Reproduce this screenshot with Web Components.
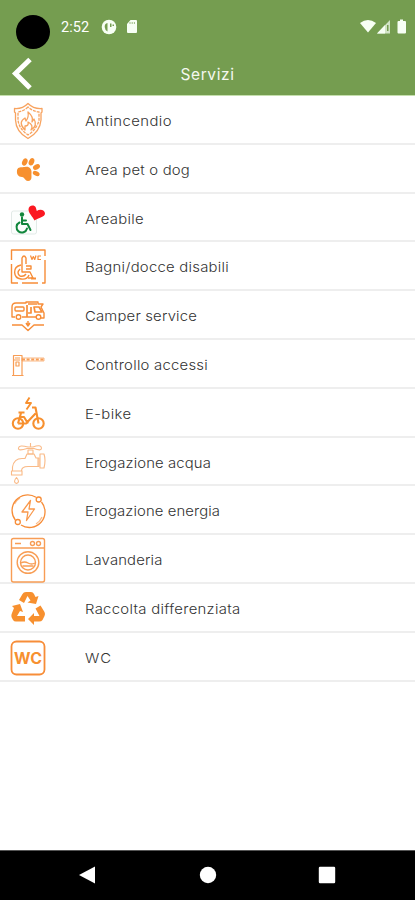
<!DOCTYPE html>
<html lang="it"><head><meta charset="utf-8"><title>Servizi</title>
<style>html,body{margin:0;height:100%;background:#fff;overflow:hidden}</style></head><body>
<service-app></service-app>
<script>
const define=(name,html,init)=>{
  const t=document.createElement('template');t.innerHTML=html;
  customElements.define(name,class extends HTMLElement{
    constructor(){super();this.attachShadow({mode:'open'}).append(t.content.cloneNode(true));}
    connectedCallback(){if(init)init(this,this.shadowRoot);}
  });
};

/* Icons share a 60x48 drawing area, the left part of a row. */
const icons={
shield:`<g stroke-width="1.3" opacity=".8"><path d="M28 7.500C24.500 11 20 13 14.500 12.500V16L15.500 17V24Q16 36 28 42.500Q40 36 41 24V17L42 16V12.500C36 13 31.500 11 28 7.500Z"/><path d="M28 11Q24 15 18 16V24Q19 33 28 39Q37 33 39 24V16Q32 15 28 11Z" stroke-dasharray="3 1"/><path d="M24 33Q18 26 25 22L26 25Q29 21 28 16Q34 21 32 26L34 23Q38 30 31 34Q34 29 28 26Q29 30 25 30L25 34Z"/></g>`,
paw:`<g fill="#f7902f" stroke="none"><path d="M17 25.500C17.500 21 22 22.500 25 22C29 21 32 24 31.500 28C31 31 33 35.500 28 36C25 36 25 32.500 22 32C18 32 16.500 29 17 25.500Z"/><ellipse cx="24.800" cy="17" rx="2.600" ry="3.700" transform="rotate(24 24.800 17)"/><ellipse cx="31.500" cy="16.800" rx="2.600" ry="3.800" transform="rotate(25 31.500 16.800)"/><ellipse cx="36.500" cy="22" rx="2.500" ry="3.700" transform="rotate(62 36.500 22)"/><ellipse cx="36.200" cy="28.500" rx="2.300" ry="3.600" transform="rotate(-65 36.200 28.500)"/></g>`,
areabile:`<rect x="11.500" y="17" width="25" height="23" rx="2" fill="#fcfefd" stroke="#e2eae7"/><g stroke="#11863c" stroke-width="2" stroke-linecap="round"><path d="M22 23.500V30H27.500L30.500 36M22 26.500H26"/><path d="M19.500 28.500A5.300 5.300 0 1 0 27 34.500"/></g><circle cx="22" cy="20.500" r="2.200" fill="#11863c" stroke="none"/><path d="M34.500 26.500C32.500 22.500 28.500 19 28.500 15.500C28.500 11.500 34 10 35.800 13.500L36.800 17C40 14.500 45 16 45 19.500C45 23 38.500 23.500 34.500 26.500Z" fill="#fb1821" stroke="none"/>`,
accessible:`<g stroke-width="1.400"><path d="M11.500 18V8H45V14M11.500 22V41H18M22 41H38M42 41H45V18"/><path d="M22 21V16Q24 12 26 16V22M22 21V30H30L33 36H28M26 24H31V27H26"/><path d="M21 23C12 25 13 36 21 37Q27 38 29 33M20 27Q16 31 20 34Q24 35 26 32"/><path d="M31 36.500H36" stroke-width="2"/><path d="M30.500 13.500L32 17.500L33.300 14.500L34.700 17.500L36 13.500M41 14H38V17.500H41" stroke-width="1.200"/></g>`,
camper:`<g stroke-width="1.400"><path d="M15 26H12V16Q12 12 16 12H26V11H38V13H43L41 16L44 22V27H41M22 26H36"/><rect x="15" y="16" width="9" height="4" rx="1"/><path d="M27 14V26M31 16V22H28M34 16H39L42 21H35ZM28 13H37" stroke-width="1.700"/><circle cx="18.500" cy="26" r="2.300"/><circle cx="38.500" cy="26" r="2.300"/><path d="M12 34H22L28 39.500L34 34H44"/><path d="M28 30V35M26 32L28 35L30 32"/></g>`,
barrier:`<g stroke-width="1.200" opacity=".85"><path d="M13.500 35.500V15.500H22V35.500M12 35.500H23.500M14 20H20M15 18H20"/><path d="M16 22H19V26H16Z"/><path d="M22 18H44V21H22Z" stroke-width=".7"/><path d="M22 19.500H43.500" stroke-width="2.200" stroke-dasharray="3 1.600"/></g>`,
bike:`<g stroke-width="2.100" stroke="#f7902f"><circle cx="18" cy="34.500" r="5.200"/><circle cx="38.500" cy="34.500" r="5.200"/><path d="M18 34.500H26L35.500 24.500M21 24L18 34.500M20 28H24L28 34.500M18.500 23.500H24.500M32 18.500H35.500L38.500 34.500"/><path d="M29.500 8.500L26 14H31L26.500 20.500" stroke-width="1.900"/></g>`,
tap:`<g stroke-width="1.100" opacity=".6"><path d="M12.500 33V29Q14 20.500 22 20.500H25L27 16H34L36 20H39V28.500H28Q21.500 28.500 21.500 33"/><path d="M11.500 33H22V37H11.500ZM40 16H44Q46 22 44 30H40ZM38 20V28"/><path d="M28 12H33V16H28ZM27 10.500Q18 13.500 18.500 10Q19 6.500 28 9H33Q41 6 41.500 10Q41.500 13.500 34 10.500ZM30.500 5V9"/><path d="M16.500 39.500Q12.500 44 16.500 45.500Q20.500 44 16.500 39.500Z"/></g>`,
energy:`<g stroke-width="1.300"><path d="M15.300 34A15.600 15.600 0 0 1 36 11.300M41.500 16A15.600 15.600 0 0 1 21 39"/><path d="M14.500 18A15 15 0 0 1 20 12M42 31A15 15 0 0 1 36 38" opacity=".6"/><circle cx="38.700" cy="13.500" r="2.500"/><circle cx="17.800" cy="36" r="2.500"/><path d="M30.500 14.500L22 26H28L26.500 34.500L34.500 23H29Z" opacity=".9"/></g>`,
washer:`<g stroke-width="1.400" opacity=".85"><rect x="11.500" y="3.500" width="33" height="43.500" rx="2"/><path d="M12 13H44M15 8.500H21"/><circle cx="32.500" cy="8.500" r="2"/><circle cx="38.500" cy="8.500" r="2"/><circle cx="28" cy="27.500" r="10.800"/><circle cx="28" cy="27.500" r="7.500"/><path d="M21 28Q24.500 26 28 28T35 28M22.500 31H33.500"/></g>`,
recycle:`<g fill="#f7902f" stroke="none"><path d="M19 16L22.500 10Q23.500 8 26 8H31Q33 8 34 10L35.500 13L38.500 12L36 20L27.500 18.500L30.500 16.500L27.500 12L24 19Z"/><path d="M12 22L20 20L23 28L20 27L17 32H25V37.500H16Q14 37.500 13 36L11.500 33Q11 31 12 29L14 24Z"/><path d="M35.500 24.500L40.500 21.500L44.500 28Q45.500 30 44.500 32L42.500 36Q41.500 37.500 39 37.500H34V41L28 35L34 29V32H39.500Z"/></g>`,
wc:`<rect x="11.500" y="8.500" width="33" height="33" rx="5" stroke-width="1.800"/><text x="14" y="30.500" textLength="28" lengthAdjust="spacingAndGlyphs" font-family="Inter,sans-serif" font-size="15.500" font-weight="700" fill="#f7902f" stroke="none">WC</text>`
};

define('service-icon',`<style>:host{display:block;width:60px;height:48px;flex:none}svg{display:block;overflow:visible;fill:none;stroke:#f78d38;stroke-linejoin:round}</style><svg width="60" height="48" viewBox="0 0 60 48"></svg>`,
(el,root)=>{root.querySelector('svg').innerHTML=icons[el.getAttribute('name')];});

/* The label's tracking is set so that it fills the width given by "span". */
define('service-row',`<style>
:host{display:flex;box-sizing:border-box;height:48.8px;border-bottom:2px solid #eee;align-items:flex-start}
.label{display:inline-block;margin-left:25px;font:300 13.5px/50px Inter,"Liberation Sans",sans-serif;color:#333;white-space:nowrap;transform-origin:0 50%}
</style><slot name="icon"></slot><span class="label"><slot></slot></span>`,
(el,root)=>{
  const label=root.querySelector('.label');
  const stretch=1.1,target=+el.getAttribute('span')/stretch;
  const gap=(target-label.getBoundingClientRect().width)/el.textContent.length;
  label.style.letterSpacing=gap.toFixed(3)+'px';
  label.style.transform=`scaleX(${stretch})`;
});

define('status-bar',`<style>
:host{display:flex;height:53px;box-sizing:border-box;padding:15px 8px 0 16px;align-items:flex-start;color:#fff}
.camera{width:34px;height:34px;border-radius:50%;background:#000}
time{margin:4px 0 0 11px;width:29px;font:400 14.500px/17px Roboto,sans-serif;letter-spacing:.1px}
svg{display:block;fill:#f7fff4}.left{margin:4px 0 0 11px}.right{margin:4px 0 0 auto}
</style><span class="camera"></span><time>2:52</time>
<svg class="left" width="38" height="16" viewBox="0 0 38 16"><circle cx="8" cy="8" r="7.300"/><path d="M6.500 4Q3.500 4.500 3.700 8Q4 11.500 6.500 12.500V4ZM9 4.500H10.500V8H9ZM11.500 5.500H13V7H11.500Z" fill="#759d50"/><path d="M29.500 1H35Q36 1 36 2V13Q36 14 35 14H27Q26 14 26 13V5Z"/><path d="M29 3V5M31.200 3V5M33.400 3V5" stroke="#759d50" stroke-width=".7"/></svg>
<svg class="right" width="48" height="16" viewBox="0 0 48 16"><path d="M1 4Q9-2 17 4L9 13.500Z"/><path d="M31 1V14.500H18Z" opacity=".72"/><path d="M26 6V14.500H18Z"/><path d="M28 6H29.500V12H28Z" fill="#759d50"/><path d="M41 .5H44V2H46Q47 2 47 3V13.500Q47 14.500 46 14.500H39.500Q38.500 14.500 38.500 13.500V3Q38.500 2 39.500 2H41Z"/></svg>`);

define('title-bar',`<style>
:host{display:grid;grid-template-columns:60px 1fr 60px;height:42px;align-items:center;color:#fff}
svg{display:block}h1{margin:0;padding-top:1px;text-align:center;font:400 15.5px/22px Inter,sans-serif;letter-spacing:.6px;color:#f4f8f0}
</style><svg width="60" height="42" viewBox="0 0 60 42"><path d="M30 6.500L15.500 20.500L30 35" fill="none" stroke="#fff" stroke-width="5"/></svg><h1><slot></slot></h1>`);

define('navigation-bar',`<style>
:host{display:flex;height:50px;background:#000;box-sizing:border-box;border-top:1px solid #555;padding:0 79px 1px;align-items:center;justify-content:space-between}svg{display:block;fill:#fff}
</style><svg width="18" height="18"><path d="M0 9L16 .5V17.500Z"/></svg><svg width="18" height="18"><circle cx="9" cy="9" r="8.200"/></svg><svg width="18" height="18"><rect x=".8" y=".8" width="16.400" height="16.400" rx="1.200"/></svg>`);

const services=[['shield','Antincendio',87],['paw','Area pet o dog',105],['areabile','Areabile',59],['accessible','Bagni/docce disabili',144],['camper','Camper service',112],['barrier','Controllo accessi',123],['bike','E-bike',46.5],['tap','Erogazione acqua',126],['energy','Erogazione energia',135],['washer','Lavanderia',77.5],['recycle','Raccolta differenziata',155.5],['wc','WC',27]];
define('service-app',`<style>
:host{display:flex;flex-direction:column;width:415px;height:900px;background:#fff}
header{height:95px;background:#759d50;flex:none}
main{flex:1;min-height:0;box-sizing:border-box;border-top:1px solid #c5dfad}
navigation-bar{flex:none}
</style><header><status-bar></status-bar><title-bar>Servizi</title-bar></header><main>${services.map(([i,n,w])=>`<service-row span="${w}"><service-icon slot="icon" name="${i}"></service-icon>${n}</service-row>`).join('')}</main><navigation-bar></navigation-bar>`);
</script></body></html>
